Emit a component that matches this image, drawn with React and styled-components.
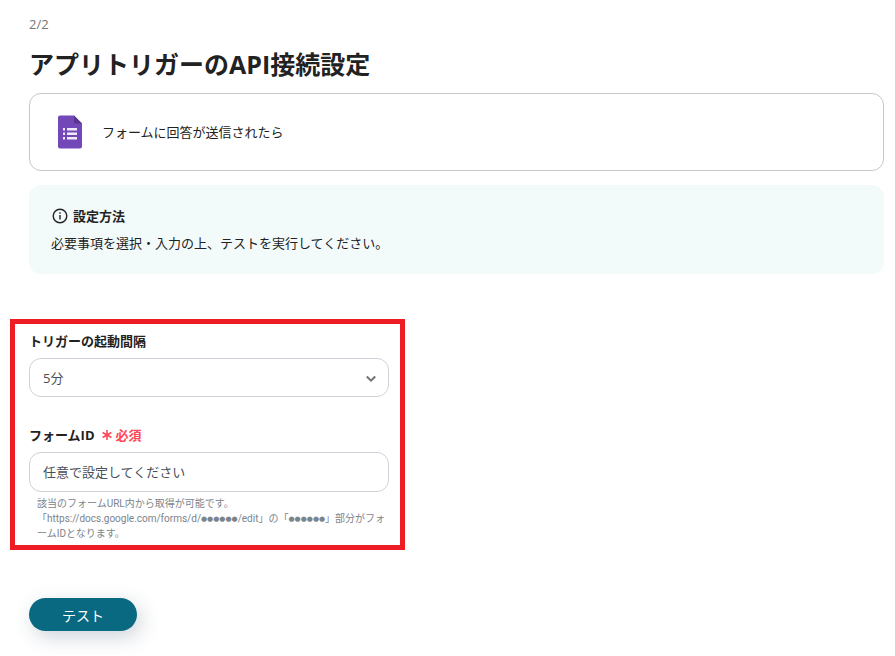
import React, { useState } from 'react';
import styled, { createGlobalStyle } from 'styled-components';

const GlobalStyle = createGlobalStyle`
	* {
		box-sizing: border-box;
	}

	body {
		margin: 0;
		background: #fff;
		color: #222;
		font-family: 'Open Sans', 'Noto Sans CJK JP', sans-serif;
		font-size: 13px;
		line-height: 20px;
	}
`;

const Page = styled.main`
	padding: 14px 11px 24px 29px;
`;

const Step = styled.p`
	margin: 0;
	font-size: 13px;
	color: #777;
`;

const Title = styled.h1`
	margin: 12px 0 11px;
	font-size: 25px;
	line-height: 36px;
	font-weight: bold;
`;

const Card = styled.section`
	display: flex;
	align-items: center;
	gap: 20px;
	height: 78px;
	padding: 0 28px;
	border: 1px solid #c8c8c8;
	border-radius: 12px;
`;

const Notice = styled.section`
	margin-top: 14px;
	padding: 21px 22px;
	border-radius: 12px;
	background: #f2fafa;

	p {
		margin: 7px 0 0;
	}
`;

const NoticeTitle = styled.h2`
	display: flex;
	align-items: center;
	gap: 4px;
	margin: 0;
	font-size: 13px;
	line-height: 20px;
	font-weight: bold;
`;

const Highlight = styled.div`
	display: flex;
	flex-direction: column;
	gap: 28px;
	max-width: 395px;
	margin: 45px 0 0 -19px;
	padding: 7px 11px 4px 14px;
	border: 5px solid #ee1c25;
`;

const Field = styled.div`
	display: flex;
	flex-direction: column;
`;

const Label = styled.label`
	margin-bottom: 7px;
	font-weight: bold;
`;

const Required = styled.span`
	display: inline-flex;
	align-items: center;
	gap: 4px;
	margin-left: 7px;
	color: #ff4757;
`;

const Control = styled.div`
	position: relative;

	select,
	input {
		display: block;
		width: 100%;
		height: 39px;
		padding: 0 13px;
		border: 1px solid #ced2d8;
		border-radius: 12px;
		background: #fff;
		color: #495057;
		font: inherit;
		appearance: none;
	}

	input {
		height: 40px;
		padding-bottom: 2px;
	}

	svg {
		position: absolute;
		top: 17px;
		right: 13px;
		pointer-events: none;
	}
`;

const Help = styled.p`
	margin: 4px 0 0;
	padding: 0 0 0 8px;
	font-family: Roboto, 'Noto Sans CJK JP', sans-serif;
	font-size: 10px;
	line-height: 15px;
	color: #7b848c;
`;

const Mask = styled.span`
	font-family: 'DejaVu Sans', sans-serif;
	font-size: 7px;
	line-height: 1;
	vertical-align: 1px;
`;

const TestButton = styled.button`
	display: block;
	width: 108px;
	height: 33px;
	margin-top: 48px;
	padding: 0;
	border: 0;
	border-radius: 17px;
	background: #086981;
	box-shadow: 4px 6px 20px rgba(30, 60, 90, 0.22);
	color: #fff;
	font-family: inherit;
	font-size: 14px;
	cursor: pointer;
`;

const FormIcon = () => (
	<svg width="24" height="34" viewBox="0 0 24 34" aria-hidden="true">
		<path fill="#7248b9" d="M2 0.5h14l8 8v23a2 2 0 0 1-2 2H2a2 2 0 0 1-2-2v-29a2 2 0 0 1 2-2z" />
		<path fill="#58358f" d="M16 0.5l8 8h-7a1 1 0 0 1-1-1z" />
		<path
			fill="#f1ebf9"
			d="M5 13h2v2.4H5zM9 13h10v2.4H9zM5 17.5h2v2.4H5zM9 17.5h10v2.4H9zM5 22h2v2.4H5zM9 22h10v2.4H9z"
		/>
	</svg>
);

const InfoIcon = () => (
	<svg width="18" height="16" viewBox="0 0 18 16" fill="none" aria-hidden="true">
		<circle cx="9" cy="8" r="6.8" stroke="#222" strokeWidth="1.4" />
		<path stroke="#222" strokeWidth="1.4" d="M9 7v4.5M9 4.2v1.5" />
	</svg>
);

const Chevron = () => (
	<svg width="10" height="8" viewBox="0 0 10 8" fill="none" aria-hidden="true">
		<path stroke="#737373" strokeWidth="2" d="M0.8 1.5L5 5.7l4.2-4.2" />
	</svg>
);

const Asterisk = () => (
	<svg width="10" height="10" viewBox="0 0 10 10" fill="none" aria-hidden="true">
		<path stroke="currentColor" strokeWidth="1.6" d="M5 0v10M0.6 2.5l8.8 5M9.4 2.5l-8.8 5" />
	</svg>
);

const App = () => {
	const [interval, setInterval] = useState('5');
	const [formId, setFormId] = useState('任意で設定してください');

	return (
		<>
			<GlobalStyle />
			<Page lang="ja">
				<Step>2/2</Step>
				<Title>アプリトリガーのAPI接続設定</Title>
				<Card>
					<FormIcon />
					<span>フォームに回答が送信されたら</span>
				</Card>
				<Notice>
					<NoticeTitle><InfoIcon />設定方法</NoticeTitle>
					<p>必要事項を選択・入力の上、テストを実行してください。</p>
				</Notice>
				<Highlight>
					<Field>
						<Label htmlFor="interval">トリガーの起動間隔</Label>
						<Control>
							<select id="interval" value={interval} onChange={e => setInterval(e.target.value)}>
								<option value="5">5分</option>
							</select>
							<Chevron />
						</Control>
					</Field>
					<Field>
						<Label htmlFor="formId">
							フォームID
							<Required><Asterisk />必須</Required>
						</Label>
						<Control>
							<input
								id="formId"
								type="text"
								value={formId}
								onChange={e => setFormId(e.target.value)}
								aria-describedby="formIdHelp"
							/>
						</Control>
						<Help id="formIdHelp">
							該当のフォームURL内から取得が可能です。
							<br />
							「https://docs.google.com/forms/d/<Mask>●●●●●●</Mask>/edit」の「<Mask>●●●●●●</Mask>」部分がフォ
							<br />
							ームIDとなります。
						</Help>
					</Field>
				</Highlight>
				<TestButton type="button">テスト</TestButton>
			</Page>
		</>
	);
};

export default App;
